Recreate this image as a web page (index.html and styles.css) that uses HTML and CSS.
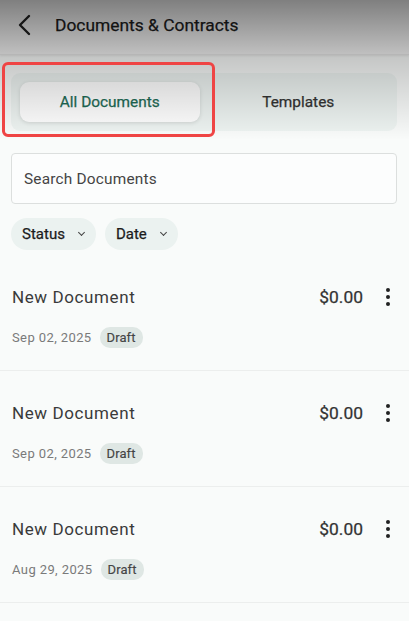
FILE: index.html
```html
<!DOCTYPE html>
<html lang="en">
<head>
    <meta charset="UTF-8">
    <title>Documents &amp; Contracts</title>
    <link rel="stylesheet" href="styles.css">
</head>
<body>

<div class="shade"></div>

<header class="topbar">
    <svg class="back" width="24" height="24" viewBox="0 0 24 24">
        <path d="M16 3 L7 12 L16 21" fill="none" stroke="#222" stroke-width="2.4" stroke-linecap="round" stroke-linejoin="round"/>
    </svg>
    <h1>Documents &amp; Contracts</h1>
</header>

<div class="tabs-wrap">
    <div class="tabs">
        <div class="tab active">All Documents</div>
        <div class="tab">Templates</div>
    </div>
    <div class="highlight"></div>
</div>

<div class="search">Search Documents</div>

<div class="filters">
    <span class="chip">Status <i class="caret"></i></span>
    <span class="chip">Date <i class="caret"></i></span>
</div>

<ul class="docs">
    <li class="doc">
        <div class="doc-row">
            <span class="doc-name">New Document</span>
            <span class="doc-amount">$0.00</span>
            <span class="more"><b></b><b></b><b></b></span>
        </div>
        <div class="doc-meta">
            <span class="doc-date">Sep 02, 2025</span>
            <span class="badge">Draft</span>
        </div>
    </li>
    <li class="doc">
        <div class="doc-row">
            <span class="doc-name">New Document</span>
            <span class="doc-amount">$0.00</span>
            <span class="more"><b></b><b></b><b></b></span>
        </div>
        <div class="doc-meta">
            <span class="doc-date">Sep 02, 2025</span>
            <span class="badge">Draft</span>
        </div>
    </li>
    <li class="doc">
        <div class="doc-row">
            <span class="doc-name">New Document</span>
            <span class="doc-amount">$0.00</span>
            <span class="more"><b></b><b></b><b></b></span>
        </div>
        <div class="doc-meta">
            <span class="doc-date">Aug 29, 2025</span>
            <span class="badge">Draft</span>
        </div>
    </li>
</ul>

</body>
</html>
```

FILE: styles.css
```css
* { margin: 0; padding: 0; box-sizing: border-box; }
html, body { height: 100%; }
body { background: #f9fbfa; font-family: Roboto, "Noto Sans", sans-serif; color: #333; position: relative; overflow: hidden; }

/**** top shading ****/
.shade { position: absolute; left: 0; right: 0; top: 0; height: 140px; background: linear-gradient(rgba(0,0,0,.48), rgba(0,0,0,.22) 38%, rgba(0,0,0,0)); pointer-events: none; z-index: 5; }

/**** header ****/
.topbar { height: 55px; display: flex; align-items: center; padding: 0 0 5px 13px; background: #f4f4f4; border-bottom: 1px solid #e8e8e8; box-shadow: 0 1px 2px rgba(0,0,0,.08); }
.topbar .back { margin-right: 18px; }
.topbar h1 { font-size: 17.4px; font-weight: 400; -webkit-text-stroke: .25px #1c1c1c; color: #1c1c1c; }

/**** tabs ****/
.tabs-wrap { position: relative; padding: 18px 12px 0 11px; }
.tabs { display: flex; height: 58px; padding: 9px; gap: 9px; background: #eef4f2; border-radius: 9px; }
.tab { flex: 1; display: flex; align-items: center; justify-content: center; font-size: 15.4px; font-weight: 400; -webkit-text-stroke: .25px currentColor; color: #333; border-radius: 9px; }
.tab.active { background: #fff; color: #1d6b55; box-shadow: 0 1px 4px rgba(0,0,0,.12); }
.highlight { position: absolute; left: 2px; top: 7px; width: 213px; height: 75px; border: 3px solid #ef4444; border-radius: 6px; z-index: 6; }

/**** search ****/
.search { margin: 22px 12px 0 11px; height: 51px; border: 1px solid #dcdfde; border-radius: 4px; background: #fcfdfd; padding-left: 12px; display: flex; align-items: center; font-size: 15.4px; color: #444; letter-spacing: .2px; }

/**** filters ****/
.filters { display: flex; gap: 9px; padding: 14px 11px 0; }
.chip { height: 32px; display: inline-flex; align-items: center; padding: 0 12px 0 11px; border-radius: 16px; background: #ebf2f0; font-size: 15px; font-weight: 400; -webkit-text-stroke: .25px currentColor; color: #1c1c1c; }
.caret { display: inline-block; width: 5px; height: 5px; border-right: 1px solid #444; border-bottom: 1px solid #444; transform: rotate(45deg); margin: -3px 0 0 14px; -webkit-text-stroke: 0; }

/**** list ****/
.docs { list-style: none; margin-top: 5px; }
.doc { height: 116px; padding: 30px 11px 0 12px; border-bottom: 1px solid #eceeed; }
.doc-row { display: flex; align-items: center; height: 24px; }
.doc-name { flex: 1; font-size: 17px; color: #3a3a3a; letter-spacing: .6px; }
.doc-amount { font-size: 17.4px; font-weight: 400; -webkit-text-stroke: .25px currentColor; color: #333; }
.more { display: flex; flex-direction: column; gap: 3px; margin: 0 8px 0 23px; }
.more b { display: block; width: 4px; height: 4px; border-radius: 50%; background: #222; }
.doc-meta { display: flex; align-items: center; margin-top: 18px; }
.doc-date { font-size: 13px; color: #7a7a7a; letter-spacing: .4px; }
.badge { margin-left: 8px; height: 21px; padding: 0 7px; border-radius: 10px; background: #dfe7e4; font-size: 13px; font-weight: 400; -webkit-text-stroke: .15px currentColor; color: #444; display: inline-flex; align-items: center; letter-spacing: .1px; }
```
